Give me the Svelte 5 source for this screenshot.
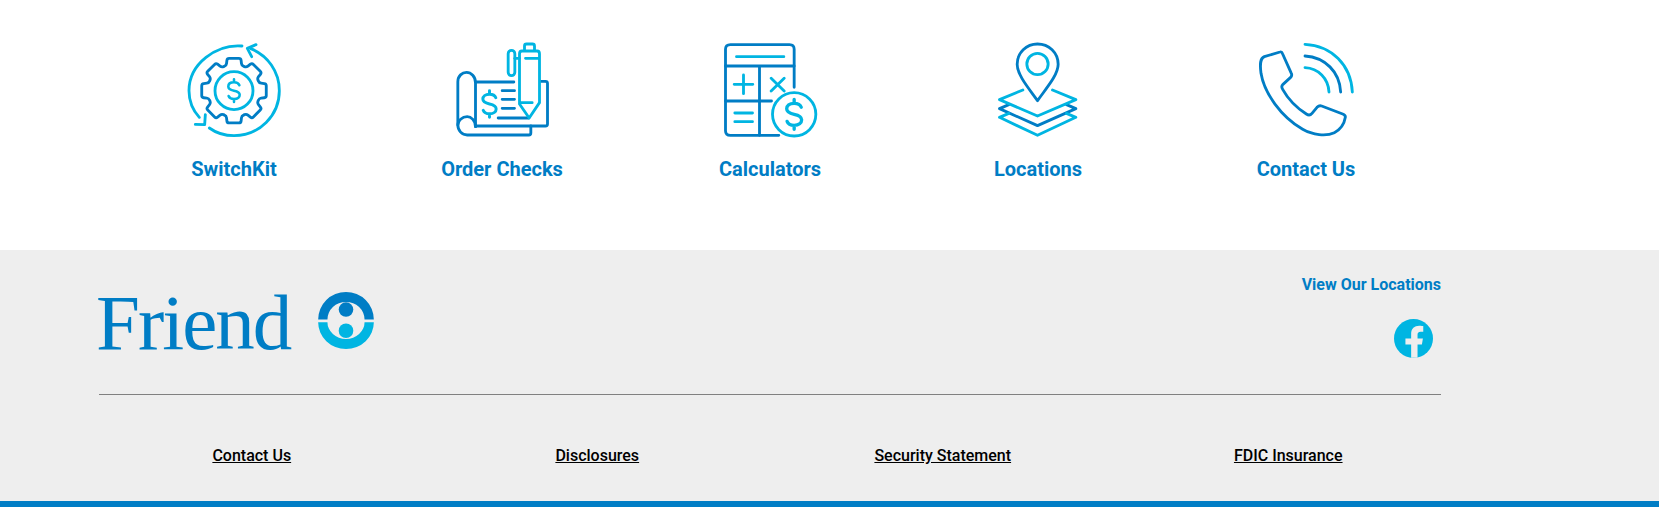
<script>
  // 8 tooth gear outline with softened corners, in the same units as the icon viewBox
  function gearPath(cx, cy) {
    let pts = [];
    for (let i = 0; i < 8; i++) {
      let t = (i * 45 - 90) * Math.PI / 180;
      for (let [da, r] of [[-17, 79], [-12, 99], [12, 99], [17, 79]]) {
        let a = t + da * Math.PI / 180;
        pts.push([cx + r * Math.cos(a), cy + r * Math.sin(a)]);
      }
    }
    const toward = (p, q, d) => {
      let len = Math.hypot(q[0] - p[0], q[1] - p[1]);
      let k = Math.min(d / len, 0.45);
      return (p[0] + (q[0] - p[0]) * k).toFixed(1) + ' ' + (p[1] + (q[1] - p[1]) * k).toFixed(1);
    };
    let d = '';
    pts.forEach((p, i) => {
      let prev = pts[(i + pts.length - 1) % pts.length];
      let next = pts[(i + 1) % pts.length];
      d += (i ? 'L' : 'M') + toward(p, prev, 6) + 'Q' + p[0].toFixed(1) + ' ' + p[1].toFixed(1) + ' ' + toward(p, next, 6);
    });
    return d + 'Z';
  }

  const footerLinks = ['Contact Us', 'Disclosures', 'Security Statement', 'FDIC Insurance'];
</script>

<section class="quick-links">
  <a class="tile" href="#switchkit">
    <svg class="icon" viewBox="72 15 300 300">
      <defs>
        <g id="dollar">
          <path d="M18 -18C15 -26 8 -28 0 -28C-12 -28 -19 -22 -19 -14C-19 -5 -10 -2 0 0C10 2 19 5 19 14C19 22 12 28 0 28C-8 28 -15 26 -18 18M0 -28V-38M0 28V38" />
        </g>
      </defs>
      <path class="cyan" d="M246 48C170 42 87 100 87 182C87 212 98 240 118 262" />
      <path class="cyan" d="M148 294C170 310 195 317 222 317C298 317 358 256 358 182C358 125 323 76 272 56" />
      <path class="cyan" d="M288 44L262 55L275 80M136 254L134 284L106 283" />
      <path class="blue" d={gearPath(222, 182)} />
      <circle class="cyan" cx="222" cy="182" r="57" />
      <use class="cyan" href="#dollar" transform="translate(222 182) scale(.9)" />
    </svg>
    <span>SwitchKit</span>
  </a>

  <a class="tile" href="#checks">
    <svg class="icon" viewBox="64.5 15 300 300">
      <path class="blue" d="M135 290V158C135 140 122 127 108 127C95 127 82 138 82 155V285C82 302 95 315 110 315H295Q301 315 301 308V288" />
      <path class="blue" d="M135 290C135 272 122 260 110 260C95 260 82 272 82 285" />
      <path class="blue" d="M137 156H250M330 154H345Q351 154 351 160V282Q351 288 345 288H137" />
      <path class="blue" d="M215 182H252M215 208H252M215 235H252M203 264H295" />
      <use class="cyan" href="#dollar" transform="translate(177 222) scale(1.05)" />
      <path class="cyan" d="M267 72Q267 63 274 63H320Q327 63 327 72V218L296 264L267 222ZM285 85H327M267 218H305" />
      <path class="cyan" d="M282 62V48Q282 42 288 42H306Q312 42 312 48V62" />
      <rect class="cyan" x="233" y="61" width="20" height="76" rx="10" />
      <path class="cyan" d="M253 85H267" />
    </svg>
    <span>Order Checks</span>
  </a>

  <a class="tile" href="#calculators">
    <svg class="icon" viewBox="88.5 15 300 300">
      <path class="blue" d="M311 172V58Q311 44 297 44H120Q105 44 105 58V302Q105 316 120 316H265" />
      <path class="blue" d="M105 108H311M207 108V316M105 213H243" />
      <path class="cyan" d="M138 80H280M131 163H187M159 135V191M242 145L281 183M281 145L242 183M133 249H186M133 275H186" />
      <circle class="cyan" cx="311" cy="253" r="65" />
      <use class="cyan" href="#dollar" transform="translate(311 253) scale(1.18)" />
    </svg>
    <span>Calculators</span>
  </a>

  <a class="tile" href="#locations">
    <svg class="icon" viewBox="82.5 15 300 300">
      <path class="blue" d="M231 212C205 175 170 135 170 103C170 68 198 42 231 42C265 42 293 68 293 103C293 135 257 175 231 212Z" />
      <circle class="cyan" cx="231" cy="102" r="32" />
      <path class="blue" d="M145 224L117 236L231 287L346 236L318 224" />
      <path class="cyan" d="M187 180L117 209L231 258L346 209L276 180" />
      <path class="cyan" d="M145 250L117 262L231 316L346 262L318 250" />
    </svg>
    <span>Locations</span>
  </a>

  <a class="tile" href="#contact">
    <svg class="icon" viewBox="75 15 300 300">
      <path class="blue" d="M147 66L100 80C88 85 86 100 90 130C100 190 150 260 215 298C245 315 285 320 310 308C330 298 340 280 343 262C344 256 340 254 335 252L272 228C266 226 262 228 258 232L243 250C238 256 232 256 226 252C195 232 170 205 155 178C151 172 151 168 156 163L178 143C182 139 183 134 181 130L155 72C153 66 150 65 147 66Z" />
      <path class="cyan" d="M222 113C262 115 292 145 294 186M222 43C302 47 360 105 364 186" />
      <path class="blue" d="M222 78C282 82 326 125 329 186" />
    </svg>
    <span>Contact Us</span>
  </a>
</section>

<footer>
  <div class="footer-inner">
    <div class="footer-top">
      <div class="logo">
        <span class="wordmark">Friend</span>
        <svg class="mark" viewBox="0 0 168 172">
          <path fill="#007dc5" d="M0 83A84 83 0 0 1 168 83H140A56 53 0 0 0 28 83Z" />
          <path fill="#00b5e2" d="M0 91A84 81 0 0 0 168 91H140A56 51 0 0 1 28 91Z" />
          <circle fill="#007dc5" cx="84" cy="53" r="22" />
          <circle fill="#00b5e2" cx="84" cy="117" r="22" />
        </svg>
      </div>
      <div class="footer-actions">
        <a class="view-locations" href="#locations">View Our Locations</a>
        <svg class="fb" viewBox="341 176 116 116">
          <circle fill="#00b5e2" cx="399" cy="234" r="58" />
          <path fill="#eeeeee" d="M392 291V252H375V234H392V220C392 204 402 196 416 196C422 196 428 197 428 197V214H420C413 214 411 218 411 223V234H427L424 252H411V291Z" />
        </svg>
      </div>
    </div>
  </div>
  <nav class="footer-links">
    {#each footerLinks as link}
      <a href="#top">{link}</a>
    {/each}
  </nav>
</footer>

<style>
  :global(body) {
    background: #fff;
    font-family: Roboto, "Liberation Sans", sans-serif;
  }

  a {
    text-decoration: none;
  }

  .quick-links {
    box-sizing: border-box;
    height: 250px;
    padding: 35px 0 0 100px;
    width: 1440px;
    display: grid;
    grid-template-columns: repeat(5, 1fr);
    align-items: start;
  }

  .tile {
    display: flex;
    flex-direction: column;
    align-items: center;
    gap: 22px;
    color: #007dc5;
    font-size: 20px;
    font-weight: 700;
    line-height: 24px;
  }

  .icon {
    width: 100px;
    height: 100px;
    overflow: visible;
  }

  .icon path,
  .icon circle,
  .icon rect,
  .icon use {
    fill: none;
    stroke-width: 8.5;
    stroke-linecap: round;
    stroke-linejoin: round;
  }

  .blue {
    stroke: #007dc5;
  }

  .cyan {
    stroke: #00b5e2;
  }

  footer {
    box-sizing: border-box;
    height: 257px;
    background: #eeeeee;
    border-bottom: 6px solid #007dc5;
  }

  .footer-inner {
    margin-left: 99px;
    width: 1342px;
    height: 145px;
    box-sizing: border-box;
    border-bottom: 1px solid #808080;
  }

  .footer-top {
    display: flex;
    justify-content: space-between;
    align-items: flex-start;
  }

  .logo {
    display: flex;
    align-items: flex-start;
    gap: 28px;
    padding-top: 33px;
    color: #007dc5;
  }

  .wordmark {
    margin-left: -3px;
    font-family: "Liberation Serif", serif;
    font-size: 79px;
    line-height: 80px;
    letter-spacing: -2px;
  }

  .mark {
    width: 56px;
    height: 57px;
    margin-top: 9px;
  }

  .footer-actions {
    display: flex;
    flex-direction: column;
    align-items: flex-end;
    padding-top: 24px;
  }

  .view-locations {
    color: #007dc5;
    font-size: 16px;
    font-weight: 700;
    line-height: 22px;
  }

  .fb {
    width: 39px;
    height: 39px;
    margin: 23px 8px 0 0;
  }

  .footer-links {
    margin: 0 0 0 79px;
    width: 1382px;
    padding-top: 50px;
    display: grid;
    grid-template-columns: repeat(4, 1fr);
    justify-items: center;
  }

  .footer-links a {
    color: #000;
    font-size: 16px;
    font-weight: 500;
    line-height: 22px;
    text-decoration: underline;
  }
</style>
